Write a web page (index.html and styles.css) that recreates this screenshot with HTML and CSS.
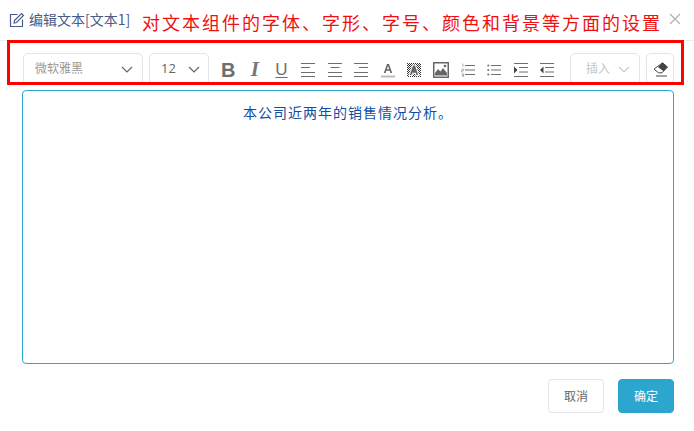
FILE: index.html
```html
<!DOCTYPE html>
<html lang="zh-CN">
<head>
<meta charset="utf-8">
<title>编辑文本</title>
<link rel="stylesheet" href="styles.css">
</head>
<body>
<div class="dialog">
  <header class="head">
    <svg class="edit-icon" width="16" height="16" viewBox="0 0 16 16" fill="none" stroke="#4a5d8a" stroke-width="1.2"><path d="M8.5 2.5H1.5v12h12V7.5"/><path d="M5.5 8.5 12.5 1.5l2 2-7 7-2.4.4z"/></svg>
    <span class="title">编辑文本[文本1]</span>
    <svg class="close" width="12" height="12" viewBox="0 0 12 12" stroke="#a8adb5" stroke-width="1.1"><path d="M1 1l10 10M11 1 1 11"/></svg>
  </header>
  <div class="toolbar">
    <div class="select font"><span class="label">微软雅黑</span><svg width="12" height="7" viewBox="0 0 12 7" fill="none" stroke="#666" stroke-width="1.2"><path d="M1 1l5 5 5-5"/></svg></div>
    <div class="select size"><span class="label">12</span><svg width="12" height="7" viewBox="0 0 12 7" fill="none" stroke="#666" stroke-width="1.2"><path d="M1 1l5 5 5-5"/></svg></div>
    <div class="icons">
      <span class="tool"><b class="glyph bold">B</b></span>
      <span class="tool"><i class="glyph italic">I</i></span>
      <span class="tool"><span class="glyph under">U</span></span>
      <span class="tool"><svg width="16" height="14" viewBox="0 0 16 14" stroke="#6e6e6e"><path d="M1 .5h14M1 4.500h9M1 9.500h14M1 13.500h14"/></svg></span>
      <span class="tool"><svg width="16" height="14" viewBox="0 0 16 14" stroke="#6e6e6e"><path d="M1 .5h14M3.500 4.500h9M1 9.500h14M1 13.500h14"/></svg></span>
      <span class="tool"><svg width="16" height="14" viewBox="0 0 16 14" stroke="#6e6e6e"><path d="M1 .5h14M6 4.500h9M1 9.500h14M1 13.500h14"/></svg></span>
      <span class="tool"><svg width="14" height="16" viewBox="0 0 14 16"><path d="M2.800 11 6 2h2l3.200 9H9.400l-.7-2.200H5.300L4.600 11zM5.800 7.200h2.400L7 3.800z" fill="#666"/><path d="M0 14.500h14" stroke="#bbb" stroke-width="2"/></svg></span>
      <span class="tool"><svg width="14" height="14" viewBox="0 0 14 14"><defs><pattern id="dots" width="2" height="2" patternUnits="userSpaceOnUse"><rect width="1" height="1" fill="#333"/><rect x="1" y="1" width="1" height="1" fill="#333"/></pattern></defs><rect width="14" height="14" fill="url(#dots)"/><path d="M2.800 12 6 2.500h2l3.200 9.500H9.400l-.7-2.300H5.300L4.600 12z" fill="#666" stroke="#fff" stroke-width="2" paint-order="stroke"/></svg></span>
      <span class="tool"><svg width="16" height="16" viewBox="0 0 16 16"><rect x=".75" y=".75" width="14.500" height="14.500" fill="none" stroke="#666" stroke-width="1.500"/><path d="M2 13.500V11l3-4 2.500 2.500L10 6l4 5v2.500z" fill="#666"/><circle cx="12" cy="4" r="1.300" fill="#666"/></svg></span>
      <span class="tool"><svg width="14" height="14" viewBox="0 0 14 14"><path d="M4 2.500h10M4 7h10M4 11.500h10" stroke="#6e6e6e"/><path d="M1 1h1v3M.5 6h2v1.500H.5V9h2M.5 11h2v1.200H1 2.500V14H.5" fill="none" stroke="#999" stroke-width=".7"/></svg></span>
      <span class="tool"><svg width="14" height="12" viewBox="0 0 14 12"><path d="M4 1.500h10M4 6h10M4 10.500h10" stroke="#6e6e6e"/><circle cx="1.300" cy="1.500" r="1.100" fill="#777"/><circle cx="1.300" cy="6" r="1.100" fill="#777"/><circle cx="1.300" cy="10.500" r="1.100" fill="#777"/></svg></span>
      <span class="tool"><svg width="14" height="14" viewBox="0 0 14 14"><path d="M0 .5h14M5 4.500h9M5 9h9M0 13.500h14" stroke="#6e6e6e"/><path d="M0 3.500 3.500 7 0 10.500z" fill="#444"/></svg></span>
      <span class="tool"><svg width="14" height="14" viewBox="0 0 14 14"><path d="M0 .5h14M5 4.500h9M5 9h9M0 13.500h14" stroke="#6e6e6e"/><path d="M3.500 3.500 0 7l3.500 3.500z" fill="#444"/></svg></span>
    </div>
    <div class="select insert"><span class="label">插入</span><svg width="12" height="7" viewBox="0 0 12 7" fill="none" stroke="#ccc" stroke-width="1.200"><path d="M1 1l5 5 5-5"/></svg></div>
    <div class="select eraser"><svg width="15" height="15" viewBox="0 0 15 15"><path d="M9.500 .8 14.500 5 9 10.800H5.500L1 7.200z" fill="#fff" stroke="#444"/><path d="M9.500 .8 14.500 5 10.500 9.200 5 5z" fill="#444"/><path d="M3 14h11" stroke="#444"/></svg></div>
  </div>
  <div class="editor"><p class="content">本公司近两年的销售情况分析。</p></div>
  <footer class="foot">
    <button class="btn cancel"><span class="btn-text">取消</span></button>
    <button class="btn ok"><span class="btn-text">确定</span></button>
  </footer>
  <div class="note">对文本组件的字体、字形、字号、颜色和背景等方面的设置</div>
  <div class="redbox"></div>
</div>
</body>
</html>
```

FILE: styles.css
```css
* { box-sizing: border-box; }
html, body { margin: 0; padding: 0; background: #fff; }
body { font-family: "Noto Sans CJK SC", "Liberation Sans", sans-serif; overflow: hidden; }
.dialog { position: relative; width: 694px; height: 431px; }
.head { height: 41px; display: flex; align-items: center; padding: 0 13px 0 9px; border-bottom: 1px solid #eceef1; }
.edit-icon { flex: none; margin: 0 4px 0 0; }
.title { font-size: 14px; color: #4a5a82; flex: 1; line-height: 20px; margin-top: -2px; }
.close { flex: none; margin-top: -3px; }
.toolbar { display: flex; align-items: center; padding: 12px 20px 0 23px; height: 44px; }
.select { height: 32px; border: 1px solid #e2e4ea; border-radius: 5px; display: flex; align-items: center; justify-content: space-between; font-size: 12px; color: #999; flex: none; }
.label { line-height: 16px; margin-top: -3px; }
.font { width: 120px; padding: 0 9px 0 11px; }
.size { width: 60px; margin-left: 6px; padding: 0 8px 0 11px; color: #666; font-size: 13px; }
.size .label { font-family: "Open Sans", sans-serif; }
.icons { display: flex; width: 354px; margin-left: 6px; flex: none; }
.tool { width: 26.6px; height: 32px; display: flex; align-items: center; justify-content: center; flex: none; padding-top: 1px; }
.glyph { color: #6e6e6e; font-family: "Liberation Sans", sans-serif; line-height: 1; }
.bold { font-size: 20px; font-weight: 700; }
.italic { font-size: 21px; font-weight: 700; font-style: italic; font-family: "Liberation Serif", serif; color: #777; }
.under { font-size: 17px; text-decoration: underline; text-underline-offset: 2px; }
.insert { width: 70px; margin-left: 1px; padding: 0 9px 0 15px; color: #c4c6cc; }
.eraser { width: 28px; margin-left: 6px; justify-content: center; }
.editor { margin: 5px 20px 0 22px; height: 274px; border: 1px solid #2ea6cf; border-radius: 4px; }
.content { margin: 11px 0 0; text-align: center; font-size: 14px; letter-spacing: 1px; line-height: 20px; color: #0d4ea6; }
.foot { display: flex; justify-content: flex-end; gap: 14px; padding: 15px 20px 0 0; }
.btn { width: 56px; height: 34px; font: 12px "Noto Sans CJK SC", sans-serif; border-radius: 4px; padding: 0 0 2px; }
.cancel { background: #fff; border: 1px solid #e2e4ea; color: #666; }
.ok { background: #2ca6cf; border: 1px solid #2ca6cf; color: #fff; }
.note { position: absolute; left: 142px; top: 8px; font-size: 18px; letter-spacing: 2px; line-height: 28px; color: #f01010; white-space: nowrap; }
.redbox { position: absolute; left: 7px; top: 40px; width: 677px; height: 45px; border: 3px solid #f00; }
```
